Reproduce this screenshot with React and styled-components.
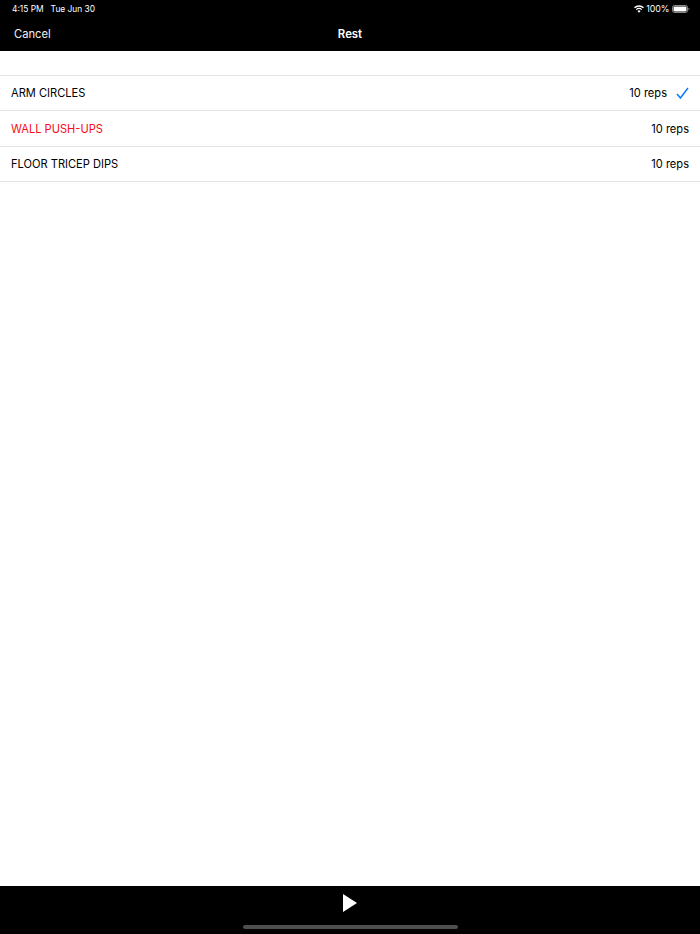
import React from "react";
import styled, { createGlobalStyle } from "styled-components";

const Global = createGlobalStyle`
  html, body { margin: 0; padding: 0; background: #fff; }
  body { font-family: Inter, "Liberation Sans", sans-serif; -webkit-font-smoothing: antialiased; }
`;

const Page = styled.div`
  width: 700px;
  height: 934px;
  display: flex;
  flex-direction: column;
  overflow: hidden;
`;

const Header = styled.header`
  height: 51px;
  background: #000;
  color: #fff;
  display: flex;
  flex-direction: column;
  flex: none;
`;

const StatusBar = styled.div`
  height: 17px;
  padding: 0 10px 0 12px;
  display: flex;
  align-items: center;
  justify-content: space-between;
  font-size: 8.4px;
  color: #fff;
`;

const StatusGroup = styled.div`
  display: flex;
  align-items: center;
  gap: ${(p) => p.$gap || 0}px;
`;

const Percent = styled.span`
  font-size: 8.8px;
`;

const NavBar = styled.div`
  flex: 1;
  display: grid;
  grid-template-columns: 1fr auto 1fr;
  align-items: center;
  padding: 0 14px 1px;
`;

const Cancel = styled.div`
  font-size: 11.2px;
  color: #f2f2f2;
`;

const Title = styled.div`
  font-size: 11.4px;
  font-weight: 600;
`;

const Content = styled.main`
  flex: 1;
  padding-top: 24px;
  background: #fff;
`;

const List = styled.div`
  border-top: 1px solid #e4e4e6;
`;

const Row = styled.div`
  height: 34.4px;
  box-sizing: content-box;
  display: flex;
  align-items: center;
  justify-content: space-between;
  padding: 0 11px;
  border-bottom: 1px solid #e4e4e6;
  font-size: 11.1px;
  color: #000;
`;

const Name = styled.span`
  color: ${(p) => (p.$alert ? "#fa0a14" : "#000")};
`;

const Right = styled.div`
  display: flex;
  align-items: center;
  gap: 9px;
`;

const Footer = styled.footer`
  height: 48px;
  flex: none;
  background: #000;
  display: flex;
  flex-direction: column;
  align-items: center;
`;

const PlayButton = styled.div`
  height: 34px;
  margin-bottom: 5px;
  display: flex;
  align-items: center;
`;

const HomeBar = styled.div`
  width: 215px;
  height: 4px;
  border-radius: 2px;
  background: #4e4e4e;
`;

const Wifi = () => (
  <svg width="10" height="8" viewBox="0 0 11 8" fill="#fff">
    <path d="M5.5 8 3.800 6.100a2.500 2.500 0 0 1 3.400 0z" />
    <path d="M2.900 5.200 2 4.200a5.200 5.200 0 0 1 7 0l-.9 1a3.900 3.900 0 0 0-5.200 0z" />
    <path d="M1.100 3.300 0 2.200a8 8 0 0 1 11 0L9.900 3.300a6.500 6.500 0 0 0-8.800 0z" />
  </svg>
);

const Battery = () => (
  <svg width="18" height="8" viewBox="0 0 18 8">
    <rect x=".5" y=".5" width="15" height="7" rx="1.800" fill="none" stroke="#8a8a8a" />
    <rect x="1.500" y="1.500" width="13" height="5" rx="1" fill="#fff" />
    <path d="M16.500 2.700c.7.2 1 .7 1 1.300s-.3 1.100-1 1.300z" fill="#8a8a8a" />
  </svg>
);

const Check = () => (
  <svg width="13" height="12" viewBox="0 0 13 12" fill="none">
    <path d="M1 7l3.400 4L12 1" stroke="#0a7aff" strokeWidth="1.500" />
  </svg>
);

const Play = () => (
  <svg width="14" height="18" viewBox="0 0 14 18">
    <path d="M0 0l14 9L0 18z" fill="#fff" />
  </svg>
);

const exercises = [
  { name: "ARM CIRCLES", reps: "10 reps", done: true },
  { name: "WALL PUSH-UPS", reps: "10 reps", alert: true },
  { name: "FLOOR TRICEP DIPS", reps: "10 reps" },
];

export default function App() {
  return (
    <Page>
      <Global />
      <Header>
        <StatusBar>
          <StatusGroup $gap={7}>
            <span>4:15 PM</span>
            <span>Tue Jun 30</span>
          </StatusGroup>
          <StatusGroup $gap={2.5}>
            <Wifi />
            <Percent>100%</Percent>
            <Battery />
          </StatusGroup>
        </StatusBar>
        <NavBar>
          <Cancel>Cancel</Cancel>
          <Title>Rest</Title>
        </NavBar>
      </Header>
      <Content>
        <List>
          {exercises.map((e) => (
            <Row key={e.name}>
              <Name $alert={e.alert}>{e.name}</Name>
              <Right>
                <span>{e.reps}</span>
                {e.done && <Check />}
              </Right>
            </Row>
          ))}
        </List>
      </Content>
      <Footer>
        <PlayButton>
          <Play />
        </PlayButton>
        <HomeBar />
      </Footer>
    </Page>
  );
}
